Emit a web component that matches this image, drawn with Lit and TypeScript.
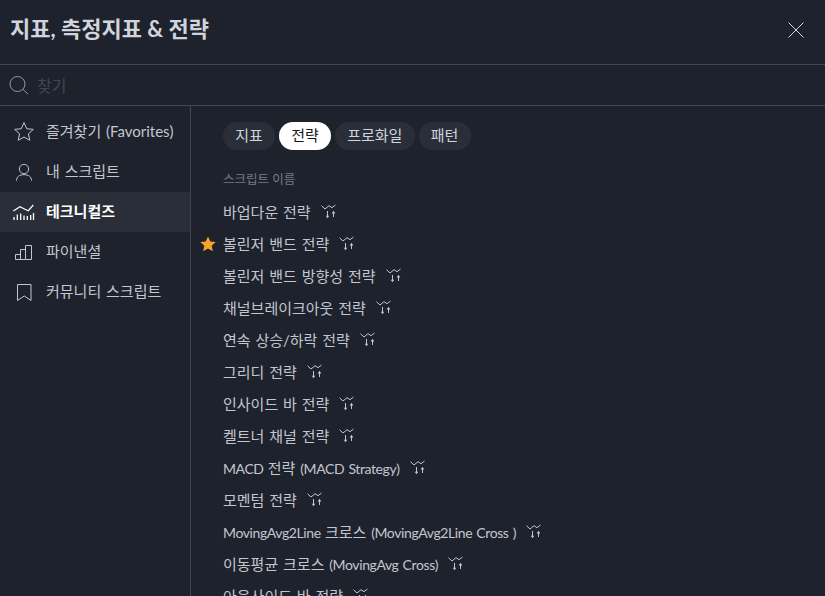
import { LitElement, html, css, svg } from "lit";
import { customElement } from "lit/decorators.js";

const nav = [
  { label: "즐겨찾기 (Favorites)", icon: svg`<path d="M14 4.6l2.7 6.1 6.6.7-4.9 4.4 1.4 6.5-5.8-3.3-5.8 3.3 1.4-6.5-4.9-4.4 6.6-.7z" fill="none" stroke="currentColor"/>` },
  { label: "내 스크립트", icon: svg`<circle cx="14" cy="11" r="4.7" fill="none" stroke="currentColor"/><path d="M6.5 22.7c0-4 3-6 7.5-6s7.5 2 7.5 6" fill="none" stroke="currentColor"/>` },
  { label: "테크니컬즈", active: true, icon: svg`<path d="M3.3 13l6.7-4.3 5 2.6 3.3 1.4 5-5.7" fill="none" stroke="currentColor" stroke-width="1.2"/><path d="M4 22v-3M7.3 22v-5.5M10.7 22v-6.5M14 22v-4.5M17.3 22v-4M20.7 22v-5M23.5 22v-7" fill="none" stroke="currentColor" stroke-width="1.3"/>` },
  { label: "파이낸셜", icon: svg`<path d="M5.5 21.5v-5h5v5zM10.5 21.5v-10h5v10zM15.5 21.5v-14h6v14z" fill="none" stroke="currentColor"/>` },
  { label: "커뮤니티 스크립트", icon: svg`<path d="M7.5 6.5h13.5v16l-6.75-4.5-6.75 4.5z" fill="none" stroke="currentColor"/>` },
];

const tabs = [
  { label: "지표" },
  { label: "전략", active: true },
  { label: "프로화일" },
  { label: "패턴" },
];

const rows = [
  { label: "바업다운 전략" },
  { label: "볼린저 밴드 전략", star: true },
  { label: "볼린저 밴드 방향성 전략" },
  { label: "채널브레이크아웃 전략" },
  { label: "연속 상승/하락 전략" },
  { label: "그리디 전략" },
  { label: "인사이드 바 전략" },
  { label: "켈트너 채널 전략" },
  { label: "MACD 전략 (MACD Strategy)" },
  { label: "모멘텀 전략" },
  { label: "MovingAvg2Line 크로스 (MovingAvg2Line Cross )" },
  { label: "이동평균 크로스 (MovingAvg Cross)" },
  { label: "아웃사이드 바 전략" },
];

const latinRun = /([A-Za-z0-9][A-Za-z0-9 ]*|\([^)]*\))/;
const runs = (label: string) =>
  label.split(latinRun).map((part, i) => (i % 2 ? html`<span class="lat">${part}</span>` : part));

const stratIcon = html`<svg class="strat" width="16" height="16" viewBox="0 0 16 16">
  <path d="M0.5 1.7L4 5l4-3.3 3 2 3.5-2.7" fill="none" stroke="currentColor"/>
  <path d="M6.5 7v5.5" fill="none" stroke="currentColor"/>
  <path d="M4.7 11.7h3.6L6.5 14.2z" fill="currentColor"/>
  <path d="M12.5 13v-5" fill="none" stroke="currentColor"/>
  <path d="M10.7 9.4h3.6L12.5 6.8z" fill="currentColor"/>
</svg>`;

@customElement("app-root")
export class AppRoot extends LitElement {
  static styles = css`
    :host {
      display: block;
      width: 825px;
      height: 596px;
      overflow: hidden;
      background: #1e222d;
      color: #d1d4dc;
      font-family: Lato, "Noto Sans CJK KR", sans-serif;
    }
    .head {
      height: 65px;
      box-sizing: border-box;
      display: flex;
      align-items: center;
      justify-content: space-between;
      padding: 0 20px 5px 10px;
      border-bottom: 1px solid #434651;
    }
    .title {
      font-size: 22px;
      font-weight: 700;
      color: #d1d4dc;
      line-height: 28px;
      margin-top: -1px;
    }
    .close {
      display: block;
      color: #d1d4dc;
    }
    .search {
      height: 41px;
      box-sizing: border-box;
      display: flex;
      align-items: center;
      gap: 8px;
      padding-left: 9px;
      border-bottom: 1px solid #434651;
      font-size: 16px;
      color: #434651;
    }
    .search svg {
      color: #9598a1;
    }
    .body {
      display: flex;
      height: 490px;
    }
    .side {
      width: 191px;
      flex: none;
      box-sizing: border-box;
      border-right: 1px solid #434651;
      padding-top: 6px;
    }
    .nav {
      height: 40px;
      display: flex;
      align-items: center;
      gap: 8px;
      padding-left: 10px;
      font-size: 15px;
      line-height: 20px;
      color: #c3c6ce;
      word-spacing: 1px;
    }
    .nav span {
      margin-top: -2px;
    }
    .nav.active {
      background: #2a2e39;
      color: #fff;
      font-weight: 700;
    }
    .nav svg {
      flex: none;
    }
    .main {
      flex: 1;
      min-width: 0;
      padding: 16px 0 0 32px;
    }
    .tabs {
      display: flex;
      gap: 4px;
    }
    .tab {
      height: 28px;
      padding: 0 12.2px 3px;
      box-sizing: border-box;
      border-radius: 14px;
      background: #2a2e39;
      color: #d1d4dc;
      font-size: 15px;
      display: flex;
      align-items: center;
    }
    .tab.active {
      background: #fff;
      color: #131722;
    }
    .cap {
      margin-top: 21px;
      height: 18px;
      line-height: 18px;
      font-size: 12.5px;
      color: #787b86;
    }
    .rows {
      margin-top: 7px;
    }
    .row {
      position: relative;
      height: 32px;
      display: flex;
      align-items: center;
      gap: 10px;
      font-size: 15px;
      line-height: 20px;
      color: #c3c6ce;
      white-space: nowrap;
      word-spacing: 1px;
    }
    .lat {
      font-size: 14px;
      letter-spacing: -0.4px;
    }
    .star {
      position: absolute;
      left: -24px;
      top: 7px;
      color: #f7a22c;
    }
    .strat {
      flex: none;
      color: #c3c6ce;
      margin-top: -1px;
    }
  `;

  render() {
    return html`
      <div class="head">
        <div class="title">지표, 측정지표 &amp; 전략</div>
        <svg class="close" width="18" height="18" viewBox="0 0 18 18"><path d="M1.5 1.5l15 15M16.5 1.5l-15 15" stroke="currentColor" fill="none"/></svg>
      </div>
      <div class="search">
        <svg width="20" height="20" viewBox="0 0 20 20"><circle cx="8.5" cy="9" r="7.5" fill="none" stroke="currentColor"/><path d="M14 14.5l5 4.5" stroke="currentColor"/></svg>
        <span>찾기</span>
      </div>
      <div class="body">
        <div class="side">
          ${nav.map(
            (n) => html`<div class="nav ${n.active ? "active" : ""}">
              <svg width="28" height="28" viewBox="0 0 28 28">${n.icon}</svg>
              <span>${n.label}</span>
            </div>`
          )}
        </div>
        <div class="main">
          <div class="tabs">
            ${tabs.map((t) => html`<div class="tab ${t.active ? "active" : ""}">${t.label}</div>`)}
          </div>
          <div class="cap">스크립트 이름</div>
          <div class="rows">
            ${rows.map(
              (r) => html`<div class="row">
                ${r.star
                  ? html`<svg class="star" width="18" height="18" viewBox="0 0 18 18"><path fill="currentColor" d="M9 1.5l2.3 5 5.4.6-4 3.7 1.1 5.4L9 13.4l-4.8 2.8 1.1-5.4-4-3.7 5.4-.6z"/></svg>`
                  : ""}
                <span>${runs(r.label)}</span>
                ${stratIcon}
              </div>`
            )}
          </div>
        </div>
      </div>
    `;
  }
}
